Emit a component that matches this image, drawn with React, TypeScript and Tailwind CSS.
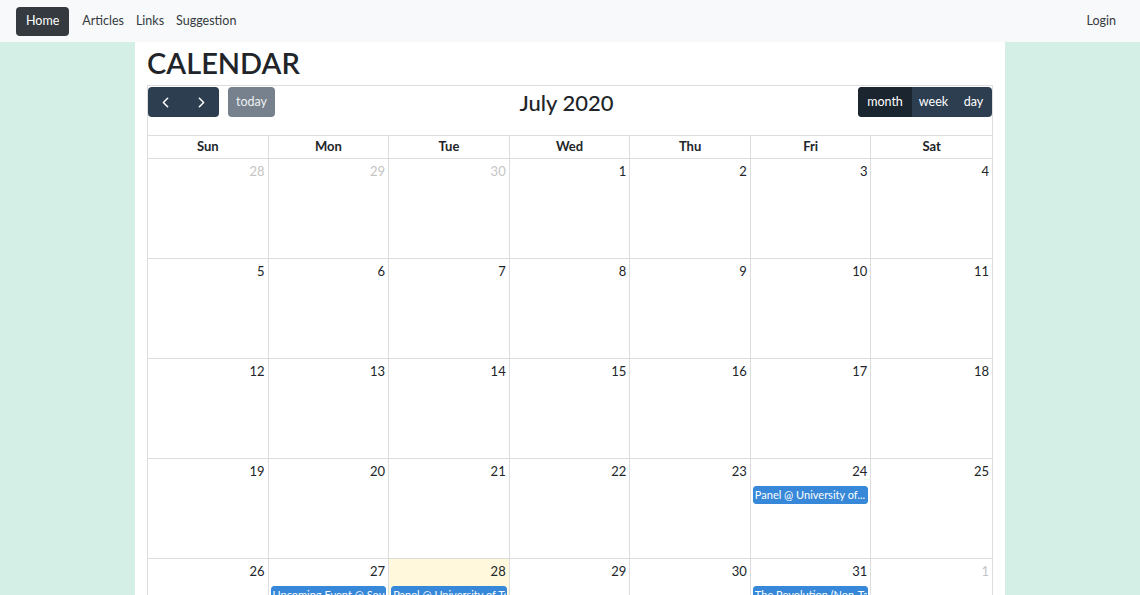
import { ChevronLeft, ChevronRight } from 'lucide-react'

interface CalEvent {
  title: string
}

interface DayCell {
  day: number
  muted?: boolean
  today?: boolean
  events?: CalEvent[]
}

const weekdays = ['Sun', 'Mon', 'Tue', 'Wed', 'Thu', 'Fri', 'Sat']

function buildWeeks(): DayCell[][] {
  const cells: DayCell[] = [
    { day: 28, muted: true },
    { day: 29, muted: true },
    { day: 30, muted: true },
  ]
  for (let d = 1; d <= 31; d++) {
    const cell: DayCell = { day: d }
    if (d === 24) cell.events = [{ title: 'Panel @ University of...' }]
    if (d === 27) cell.events = [{ title: 'Upcoming Event @ Southern University' }]
    if (d === 28) {
      cell.today = true
      cell.events = [{ title: 'Panel @ University of Texas' }]
    }
    if (d === 31) cell.events = [{ title: 'The Revolution (Non-Talk) @ Hall' }]
    cells.push(cell)
  }
  for (let d = 1; cells.length < 42; d++) cells.push({ day: d, muted: true })
  const weeks: DayCell[][] = []
  for (let i = 0; i < cells.length; i += 7) weeks.push(cells.slice(i, i + 7))
  return weeks
}

function NavBar() {
  return (
    <nav className="flex h-[42px] items-center justify-between bg-[#f8f9fa] pl-4 pr-6 text-[12.5px]">
      <div className="flex items-center">
        <a className="flex h-[29px] items-center rounded-[4px] bg-[#343a40] px-[10px] text-white">Home</a>
        <a className="ml-[13px] text-[#343a40]">Articles</a>
        <a className="ml-[12px] text-[#343a40]">Links</a>
        <a className="ml-[12px] text-[#343a40]">Suggestion</a>
      </div>
      <a className="text-[#343a40]">Login</a>
    </nav>
  )
}

function Toolbar() {
  return (
    <div className="flex h-[30px] items-center justify-between">
      <div className="flex items-center">
        <div className="flex h-[30px] overflow-hidden rounded-[4px] bg-[#2c3e50] text-white">
          <button className="flex w-[35px] items-center justify-center">
            <ChevronLeft size={17} strokeWidth={2.2} />
          </button>
          <button className="flex w-[36px] items-center justify-center">
            <ChevronRight size={17} strokeWidth={2.2} />
          </button>
        </div>
        <button className="ml-[9px] h-[30px] rounded-[4px] bg-[#76818d] px-[8px] text-[12.5px] text-[#eef0f2]">today</button>
      </div>
      <h2 className="text-[22px] font-medium text-[#212529]">July 2020</h2>
      <div className="flex h-[30px] overflow-hidden rounded-[4px] bg-[#2c3e50] text-[12.5px] text-white">
        <button className="w-[54px] bg-[#1a252f]">month</button>
        <button className="w-[43px]">week</button>
        <button className="w-[37px]">day</button>
      </div>
    </div>
  )
}

function Calendar() {
  const weeks = buildWeeks()
  return (
    <div className="w-[846px] border border-[#ddd] pt-px">
      <Toolbar />
      <div className="mt-[18px] grid grid-cols-7 border-t border-[#ddd]">
        {weekdays.map((w, i) => (
          <div
            key={w}
            className={`flex h-[22px] items-center justify-center text-[13px] font-bold text-[#212529] ${i < 6 ? 'border-r border-[#ddd]' : ''}`}
          >
            {w}
          </div>
        ))}
      </div>
      {weeks.map((week, wi) => (
        <div key={wi} className="grid h-[100px] grid-cols-7 border-t border-[#ddd]">
          {week.map((c, ci) => (
            <div
              key={ci}
              className={`flex flex-col ${ci < 6 ? 'border-r border-[#ddd]' : ''} ${c.today ? 'bg-[#fff8dc]' : ''}`}
            >
              <div className={`pr-[3px] pt-[3px] text-right text-[13px] leading-[18px] ${c.muted ? 'text-[#c4c4c4]' : 'text-[#212529]'}`}>
                {c.day}
              </div>
              {c.events?.map((e, ei) => (
                <div
                  key={ei}
                  className="mx-[2px] mt-[6px] h-[18px] overflow-hidden whitespace-nowrap rounded-[3px] border border-[#3788d8] bg-[#3788d8] px-[1px] text-[11px] leading-[16px] text-white"
                >
                  {e.title}
                </div>
              ))}
            </div>
          ))}
        </div>
      ))}
    </div>
  )
}

export default function App() {
  return (
    <div className="min-h-screen bg-[#d4f0e6]" style={{ fontFamily: "'Segoe UI', Lato, 'Noto Sans', sans-serif" }}>
      <NavBar />
      <main className="mx-auto w-[870px] bg-white px-3 pb-6">
        <h1 className="pt-px text-[29px] font-semibold leading-[40px] text-[#212529]">CALENDAR</h1>
        <div className="mt-[2px]">
          <Calendar />
        </div>
      </main>
    </div>
  )
}
